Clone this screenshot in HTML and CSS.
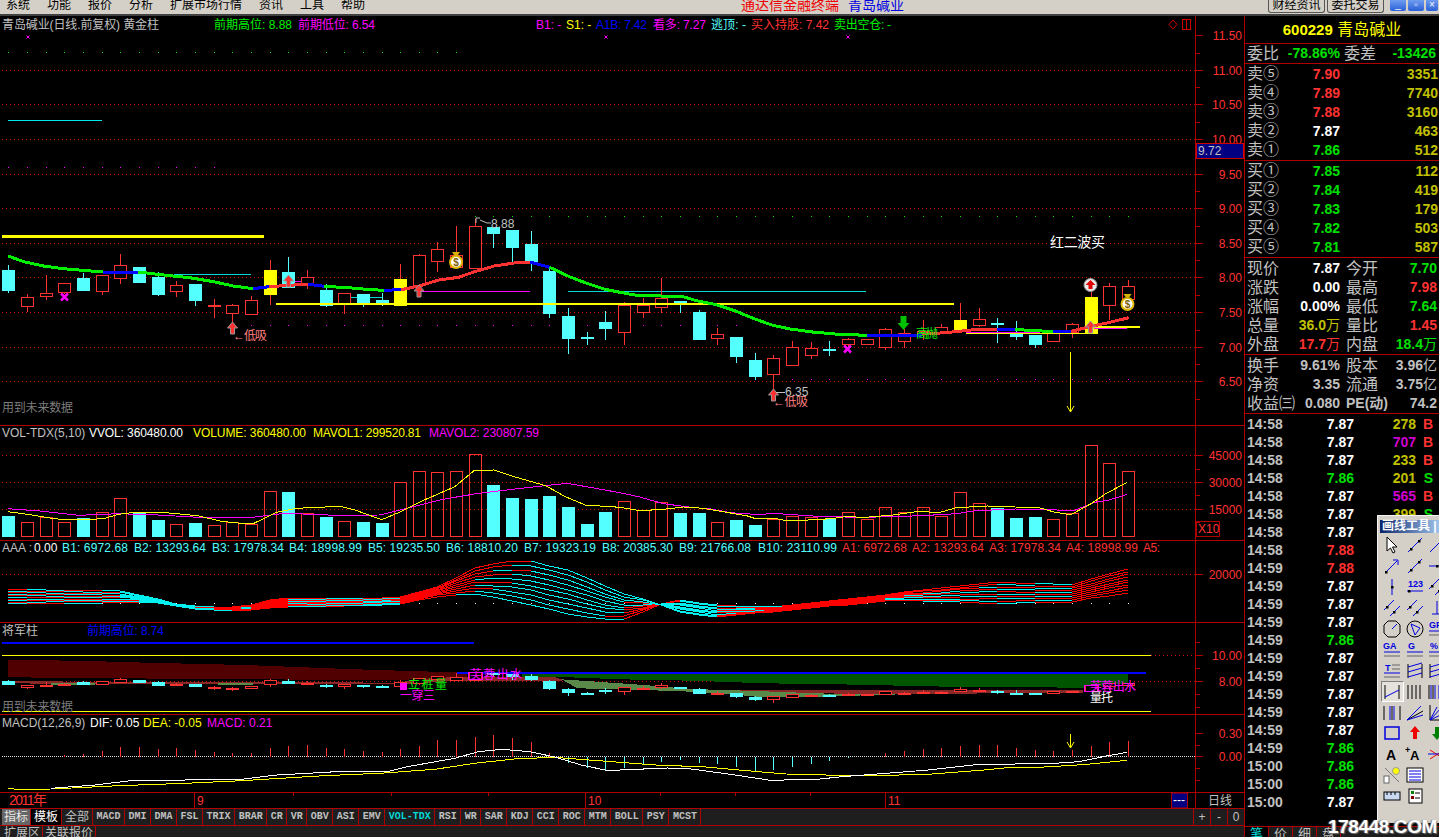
FILE: index.html
```html
<!DOCTYPE html>
<html lang="zh-CN">
<head>
    <meta charset="UTF-8">
    <title>通达信金融终端 - 青岛碱业</title>
    <link rel="stylesheet" href="styles.css">
</head>
<body>
    <div class="menubar">
        <nav class="menu">
            <span>系统</span><span>功能</span><span>报价</span><span>分析</span><span>扩展市场行情</span><span>资讯</span><span>工具</span><span>帮助</span>
        </nav>
        <div class="app-title"><span class="app-name">通达信金融终端</span><span class="app-stock">青岛碱业</span></div>
        <div class="top-btns">
            <span class="top-btn">财经资讯</span><span class="top-btn">委托交易</span>
            <span class="win-btn">_</span><span class="win-btn">▫</span><span class="win-btn win-close">×</span>
        </div>
    </div>

    <div class="workspace">
        <div class="charts">
            <svg id="main" class="panel h-main" viewBox="0 16 1244 409"></svg>
            <svg id="vol" class="panel h-vol" viewBox="0 426 1244 114"></svg>
            <svg id="aaa" class="panel h-aaa" viewBox="0 541 1244 81"></svg>
            <svg id="jj" class="panel h-jj" viewBox="0 623 1244 91"></svg>
            <svg id="macd" class="panel h-macd" viewBox="0 715 1244 77"></svg>
            <svg id="dates" class="panel h-dates" viewBox="0 793 1244 15"></svg>

            <div class="tabs">
                <span class="tab tab-cn tab-active">指标</span>
                <span class="tab tab-cn tab-black">模板</span>
                <span class="tab tab-cn tab-all">全部</span>
                <span class="tab">MACD</span><span class="tab">DMI</span><span class="tab">DMA</span><span class="tab">FSL</span>
                <span class="tab">TRIX</span><span class="tab">BRAR</span><span class="tab">CR</span><span class="tab">VR</span>
                <span class="tab">OBV</span><span class="tab">ASI</span><span class="tab">EMV</span><span class="tab tab-cur">VOL-TDX</span>
                <span class="tab">RSI</span><span class="tab">WR</span><span class="tab">SAR</span><span class="tab">KDJ</span>
                <span class="tab">CCI</span><span class="tab">ROC</span><span class="tab">MTM</span><span class="tab">BOLL</span>
                <span class="tab">PSY</span><span class="tab">MCST</span>
                <span class="zoom-btns"><span>+</span><span>-</span><span>0</span></span>
            </div>
            <div class="ext-tabs"><span>扩展区</span><span>关联报价</span></div>
        </div>

        <aside class="quote">
            <div class="q-head"><b>600229</b> 青岛碱业</div>

            <div class="q-ratio">
                <span class="lbl">委比</span><b class="green">-78.86%</b><span class="lbl">委差</span><b class="green">-13426</b>
            </div>

            <div class="q-book">
                <div class="row"><span class="lbl">卖⑤</span><b class="red">7.90</b><b class="olive">3351</b></div>
                <div class="row"><span class="lbl">卖④</span><b class="red">7.89</b><b class="olive">7740</b></div>
                <div class="row"><span class="lbl">卖③</span><b class="red">7.88</b><b class="olive">3160</b></div>
                <div class="row"><span class="lbl">卖②</span><b class="white">7.87</b><b class="olive">463</b></div>
                <div class="row"><span class="lbl">卖①</span><b class="green">7.86</b><b class="olive">512</b></div>
            </div>
            <div class="q-book">
                <div class="row"><span class="lbl">买①</span><b class="green">7.85</b><b class="olive">112</b></div>
                <div class="row"><span class="lbl">买②</span><b class="green">7.84</b><b class="olive">419</b></div>
                <div class="row"><span class="lbl">买③</span><b class="green">7.83</b><b class="olive">179</b></div>
                <div class="row"><span class="lbl">买④</span><b class="green">7.82</b><b class="olive">503</b></div>
                <div class="row"><span class="lbl">买⑤</span><b class="green">7.81</b><b class="olive">587</b></div>
            </div>

            <div class="q-stats">
                <div class="stat"><span class="lbl">现价</span><b class="white">7.87</b><span class="lbl">今开</span><b class="green">7.70</b></div>
                <div class="stat"><span class="lbl">涨跌</span><b class="white">0.00</b><span class="lbl">最高</span><b class="red">7.98</b></div>
                <div class="stat"><span class="lbl">涨幅</span><b class="white">0.00%</b><span class="lbl">最低</span><b class="green">7.64</b></div>
                <div class="stat"><span class="lbl">总量</span><b class="olive">36.0<i>万</i></b><span class="lbl">量比</span><b class="red">1.45</b></div>
                <div class="stat"><span class="lbl">外盘</span><b class="red">17.7<i>万</i></b><span class="lbl">内盘</span><b class="green">18.4<i>万</i></b></div>
            </div>

            <div class="q-stats q-gray">
                <div class="stat"><span class="lbl">换手</span><b>9.61%</b><span class="lbl">股本</span><b>3.96<i>亿</i></b></div>
                <div class="stat"><span class="lbl">净资</span><b>3.35</b><span class="lbl">流通</span><b>3.75<i>亿</i></b></div>
                <div class="stat"><span class="lbl">收益㈢</span><b>0.080</b><b class="pe">PE(动)</b><b>74.2</b></div>
            </div>

            <div id="ticks" class="q-ticks"></div>

            <div class="q-tabs">
                <span class="cur">笔</span><span>价</span><span>细</span><span>盘</span>
            </div>
        </aside>
    </div>

    <div class="toolbox">
        <div class="tool-title">画线工具 |</div>
        <div id="tools" class="tool-grid"></div>
    </div>
    <div class="watermark">178448.COM</div>

    <script src="chart.js"></script>
</body>
</html>
```

FILE: styles.css
```css
html, body {
    margin: 0;
    height: 100%;
    overflow: hidden;
    background-color: #000;
}

body {
    position: relative;
    font-family: "Liberation Sans", "Noto Sans CJK SC", sans-serif;
    font-size: 12px;
    color: #c0c0c0;
}

/* barre de menu */
.menubar {
    display: flex;
    height: 14px;
    overflow: hidden;
    background-color: #d4d0c8;
    border-bottom: 2px solid #404040;
    color: #000;
    line-height: 10px;
}

.menu {
    display: flex;
    gap: 17px;
    width: 735px;
    padding-left: 6px;
}

.app-title {
    display: flex;
    gap: 9px;
    font-size: 14px;
}

.app-name {
    color: #f00000;
}

.app-stock {
    color: #0000e0;
}

.top-btns {
    display: flex;
    align-items: flex-start;
    margin-left: auto;
}

.top-btn {
    width: 55px;
    height: 12px;
    margin-right: 2px;
    border: 1px solid #555;
    border-top: none;
    border-radius: 0 0 3px 3px;
    text-align: center;
}

.top-btn + .top-btn {
    margin-right: 6px;
}

.win-btn {
    width: 16px;
    height: 11px;
    margin-right: 2px;
    border-radius: 0 0 2px 2px;
    background: linear-gradient(#6f9cf0, #2a5fd8);
    color: #fff;
    font-size: 10px;
    line-height: 9px;
    text-align: center;
}

.win-close {
    width: 12px;
    margin-right: 1px;
}

/* zone principale */
.workspace {
    display: flex;
    height: 821px;
}

.charts {
    width: 1244px;
    border-right: 1px solid #b00000;
}

.panel {
    display: block;
    width: 1244px;
    border-bottom: 1px solid #b00000;
    font-family: "Liberation Sans", "Noto Sans CJK SC", sans-serif;
    font-size: 12px;
}

.h-main { height: 409px; }
.h-vol { height: 114px; }
.h-aaa { height: 81px; }
.h-jj { height: 91px; }
.h-macd { height: 77px; }
.h-dates { height: 15px; }

/* couleurs du graphique */
.t-gray { fill: #c0c0c0; }
.t-dim { fill: #7c7c7c; }
.t-white { fill: #fff; }
.t-red { fill: #ff3232; }
.t-pink { fill: #ff8080; }
.t-green { fill: #00f000; }
.t-magenta { fill: #ff00ff; }
.t-yellow { fill: #ffff00; }
.t-blue { fill: #0000ff; }
.t-cyan { fill: #54ffff; }
.t-big { font-size: 14px; }

.crisp { shape-rendering: crispEdges; }

.grid {
    stroke: #c80000;
    stroke-dasharray: 1 3;
    shape-rendering: crispEdges;
}

.axis {
    stroke: #b00000;
    shape-rendering: crispEdges;
}

.zero {
    stroke: #e0e0e0;
    stroke-dasharray: 1 1;
    shape-rendering: crispEdges;
}

/* onglets */
.tabs {
    display: flex;
    height: 16px;
    padding-left: 2px;
    background-color: #1e1e1e;
    border-bottom: 1px solid #b00000;
}

.tab {
    padding: 0 3.5px;
    border-right: 1px solid #b00000;
    font-family: "Liberation Mono", monospace;
    font-size: 10px;
    font-weight: bold;
    line-height: 16px;
}

.tab-cn {
    padding: 0 2px;
    font-family: "Liberation Sans", "Noto Sans CJK SC", sans-serif;
    font-size: 12px;
    font-weight: normal;
}

.tab-active {
    background-color: #666;
    color: #e8e8e8;
}

.tab-black {
    padding: 0 3px;
    background-color: #000;
    color: #fff;
}

.tab-all {
    padding: 0 3px;
}

.tab-cur {
    color: #00d8d8;
}

.zoom-btns {
    display: flex;
    margin-left: auto;
    line-height: 16px;
    text-align: center;
}

.zoom-btns span {
    width: 16px;
    border-left: 1px solid #b00000;
}

.ext-tabs {
    display: flex;
    height: 11px;
    overflow: hidden;
    padding-left: 2px;
    background-color: #1e1e1e;
    line-height: 14px;
}

.ext-tabs span {
    padding: 0 2px;
    border-right: 1px solid #b00000;
}

/* panneau de cotation */
.quote {
    position: relative;
    width: 194px;
    height: 821px;
}

.q-head {
    height: 27px;
    border-bottom: 1px solid #b00000;
    color: #ffff00;
    font-size: 16px;
    line-height: 28px;
    text-align: center;
}

.quote .q-head b {
    font-size: 15px;
}

.q-ratio {
    display: grid;
    grid-template-columns: 32px 65px 32px 60px;
    height: 19px;
    padding-left: 2px;
    border-bottom: 1px solid #b00000;
    line-height: 19px;
    white-space: nowrap;
}

.q-ratio b {
    text-align: right;
}

.q-ratio b:nth-of-type(1) {
    padding-right: 4px;
}

.q-book {
    height: 96px;
    border-bottom: 1px solid #b00000;
}

.row {
    display: grid;
    grid-template-columns: 36px 57px 98px;
    height: 19px;
    padding-left: 2px;
    line-height: 20px;
}

.row b,
.stat b {
    text-align: right;
}

.q-stats {
    padding-top: 1px;
    border-bottom: 1px solid #b00000;
}

.stat {
    display: grid;
    grid-template-columns: 32px 61px 37px 60px;
    height: 19px;
    padding-left: 2px;
    line-height: 19px;
    white-space: nowrap;
}

.stat .lbl:nth-child(3) {
    padding-left: 6px;
}

.q-stats .pe {
    padding-left: 6px;
    text-align: left;
}

.lbl {
    font-size: 16px;
    color: #c0c0c0;
}

.quote b {
    font-size: 14px;
}

.quote b i {
    font-size: 14px;
    font-style: normal;
    font-weight: normal;
}

.red { color: #ff3232; }
.green { color: #00e000; }
.olive { color: #c0c000; }
.white { color: #fff; }
.magenta { color: #d000d0; }

.q-gray b {
    color: #c0c0c0;
}

.q-ticks {
    padding-top: 1px;
}

.tick {
    display: grid;
    grid-template-columns: 36px 71px 62px 17px;
    height: 18px;
    padding-left: 2px;
    line-height: 18px;
    font-size: 14px;
    font-weight: bold;
}

.tick span {
    text-align: right;
}

.tick .time {
    text-align: left;
    color: #c0c0c0;
}

.q-tabs {
    position: absolute;
    left: 0;
    bottom: 0;
    display: flex;
    width: 100%;
    height: 10px;
    overflow: hidden;
    border-top: 1px solid #b00000;
    background-color: #1e1e1e;
    line-height: 13px;
}

.q-tabs span {
    width: 23px;
    border-right: 1px solid #b00000;
    text-align: center;
    font-size: 13px;
}

.q-tabs .cur {
    background-color: #000;
    color: #00e0e0;
}

/* fenêtre d'outils flottante */
.toolbox {
    position: absolute;
    left: 1377px;
    top: 515px;
    width: 62px;
    height: 307px;
    overflow: hidden;
    background-color: #d4d0c8;
    border-left: 1px solid #f4f4f4;
    border-top: 1px solid #f4f4f4;
}

.tool-title {
    width: 60px;
    height: 13px;
    margin: 4px 0 2px 2px;
    background: linear-gradient(to right, #0a246a, #a6caf0);
    color: #fff;
    font-size: 12px;
    font-weight: bold;
    line-height: 13px;
    padding-left: 2px;
    white-space: nowrap;
}

.tool-grid {
    display: grid;
    grid-template-columns: repeat(3, 22.5px);
    grid-auto-rows: 20.9px;
    padding-left: 3px;
}

.tool {
    display: flex;
    align-items: center;
    justify-content: center;
}

.tool svg {
    width: 20px;
    height: 20px;
    font-family: "Liberation Sans", sans-serif;
}

.tool-on {
    box-sizing: border-box;
    border: 1px solid;
    border-color: #808080 #fff #fff #808080;
    background-color: #e4e1da;
}

.watermark {
    position: absolute;
    right: 2px;
    bottom: 0;
    color: #fff;
    font-size: 19px;
    font-weight: bold;
    letter-spacing: -0.4px;
    line-height: 20px;
    text-shadow: 1px 1px 1px #777, -1px 0 1px #777;
}
```

FILE: chart.js
```js
// Toutes les coordonnées y sont en pixels de la page (viewBox de chaque panneau)
const STEP = 18.66;
const cx = i => Math.round(8.3 + STEP * i);
const RED = '#ff3232', CYAN = '#54ffff', YEL = '#ffff00', MAG = '#ff00ff', GRN = '#00f000', BLU = '#0000ff';

// relevés faits sur l'écran agrandi : [x, y] relevé -> pixel de la page
const scale = (x0, sx, y0) => pts => pts.map(p => [+(x0 + p[0] / sx).toFixed(1), +(y0 + p[1] / 3).toFixed(1)]);
const topL = scale(0, 2.529, 200), topR = scale(620, 2.703, 200);
const volL = scale(0, 2.529, 425), volR = scale(620, 2.529, 425);
const lowL = scale(0, 2.529, 620), lowR = scale(620, 2.529, 620);

function text(x, y, str, cls, width) {
    const len = width ? ` textLength="${width}"` : '';
    return `<text x="${x}" y="${y}" class="${cls}"${len}>${str}</text>`;
}

function rtext(x, y, str, cls) {
    return `<text x="${x}" y="${y}" class="${cls}" text-anchor="end">${str}</text>`;
}

function line(x1, y1, x2, y2, color, w) {
    return `<line x1="${x1}" y1="${y1}" x2="${x2}" y2="${y2}" stroke="${color}" stroke-width="${w || 1}" class="crisp"/>`;
}

function poly(pts, color, w) {
    return `<polyline points="${pts.join(' ')}" fill="none" stroke="${color}" stroke-width="${w || 1}" class="crisp"/>`;
}

function area(pts, color) {
    return `<polygon points="${pts.join(' ')}" fill="${color}" class="crisp"/>`;
}

function grid(y, x1) {
    return `<line x1="${x1 || 2}" y1="${y}" x2="1195" y2="${y}" class="grid"/>`;
}

function axis(y1, y2, labels, minors) {
    let s = `<line x1="1195.5" y1="${y1}" x2="1195.5" y2="${y2}" class="axis"/>`;
    labels.forEach(l => {
        s += `<line x1="1196" y1="${l[0]}" x2="1203" y2="${l[0]}" class="axis"/>`;
        s += rtext(1242, Math.round(l[0]) + 4, l[1], 't-red');
    });
    (minors || []).forEach(y => {
        s += `<line x1="1196" y1="${y}" x2="1200" y2="${y}" class="axis"/>`;
    });
    return s;
}

// [type, haut, corps haut, corps bas, bas] - relevés sur l'écran agrandi
const candles = [
    ['c', 192, 207, 270, 275], ['r', 280, 292, 317, 332], ['r', 222, 279, 287, 296], ['r', 245, 250, 275, 280],
    ['c', 215, 231, 270, 270], ['r', 222, 226, 272, 281], ['r', 159, 196, 233, 248], ['c', 198, 198, 245, 245],
    ['c', 213, 227, 282, 285], ['r', 240, 256, 272, 287], ['c', 249, 249, 300, 315], ['r', 294, 313, 316, 350],
    ['r', 310, 316, 338, 370], ['r', 285, 301, 341, 341], ['y', 177, 207, 281, 311], ['c', 168, 213, 262, 262],
    ['r', 208, 232, 252, 265], ['c', 250, 267, 315, 317], ['r', 280, 280, 310, 338], ['c', 279, 279, 310, 318],
    ['c', 275, 297, 310, 315], ['y', 190, 234, 314, 314], ['r', 160, 166, 254, 270], ['r', 123, 148, 182, 212],
    ['r', 75, 165, 200, 205], ['r', 55, 79, 203, 203], ['c', 78, 78, 99, 140], ['c', 87, 87, 141, 183],
    ['c', 90, 129, 190, 210], ['c', 195, 210, 339, 350], ['c', 321, 345, 414, 458], ['c', 393, 407, 410, 432],
    ['c', 330, 363, 384, 417],
    ['r', 303, 316, 395, 432], ['r', 290, 316, 335, 350], ['r', 232, 293, 320, 335], ['c', 300, 300, 310, 336],
    ['c', 327, 333, 417, 417], ['r', 381, 403, 413, 432], ['c', 408, 408, 468, 486], ['c', 457, 477, 528, 538],
    ['r', 462, 475, 521, 570], ['r', 420, 442, 494, 494], ['r', 423, 445, 464, 473], ['c', 420, 445, 449, 465],
    ['r', 410, 418, 431, 450], ['r', 418, 418, 431, 431], ['r', 381, 388, 440, 446], ['r', 385, 400, 422, 441],
    ['r', 358, 392, 402, 418], ['r', 368, 382, 395, 400], ['y', 306, 357, 387, 395], ['r', 321, 358, 374, 378],
    ['c', 351, 366, 369, 425], ['c', 360, 400, 408, 417], ['c', 402, 402, 432, 441], ['r', 395, 395, 422, 422],
    ['r', 366, 373, 395, 410], ['y', 260, 288, 398, 398], ['r', 246, 259, 314, 357], ['r', 238, 259, 296, 300]
];

function candle(i, map, noYellow) {
    const c = candles[i], x = cx(i) + 0.5;
    const [hi, top, bot, lo] = c.slice(1).map(map);
    const type = noYellow && c[0] === 'y' ? 'r' : c[0];
    const color = type === 'c' ? CYAN : type === 'y' ? YEL : RED;
    const wick = type === 'c' ? CYAN : RED;
    const thin = bot - top < 2;
    let s = line(x, hi, x, top, wick) + line(x, bot, x, lo, wick);
    if (type === 'r' && !thin) {
        s += `<rect x="${x - 6}" y="${top}" width="12" height="${bot - top}" fill="#000" stroke="${RED}" class="crisp"/>`;
    } else {
        s += `<rect x="${x - 6.5}" y="${top}" width="13" height="${Math.max(bot - top, 2)}" fill="${color}" class="crisp"/>`;
    }
    return s;
}

function upArrow(x, y) {
    return `<path d="M${x} ${y - 6}l5 6h-3v6h-4v-6h-3z" fill="${RED}" stroke="#999" stroke-width="1"/>`;
}

function downArrow(x, y) {
    return `<path d="M${x} ${y + 7}l6-7h-3v-7h-6v7h-3z" fill="#00c000"/>`;
}

function moneyBag(x, y) {
    return `<path d="M${x - 4} ${y - 9}h8l-2 3h-4z" fill="#d8b000"/>` +
        `<circle cx="${x}" cy="${y + 1}" r="6" fill="#fff" stroke="#e0b800" stroke-width="2"/>` +
        `<text x="${x}" y="${y + 5}" text-anchor="middle" font-size="10" font-weight="bold" fill="#806000">$</text>`;
}

function cross(x, y, r, w) {
    return `<path d="M${x - r} ${y - r}L${x + r} ${y + r}M${x + r} ${y - r}L${x - r} ${y + r}" stroke="${MAG}" stroke-width="${w}"/>`;
}

function drawMain() {
    let s = '';
    [70.5, 104.5, 139.5, 174.5, 208.5, 243.5, 277.5, 312.5, 347.5, 381.5].forEach(y => { s += grid(y); });

    // points de niveau
    for (let i = 0; i <= 24; i++) s += `<rect x="${cx(i)}" y="52" width="1" height="1" fill="${GRN}"/>`;
    for (let i = 25; i <= 60; i++) s += `<rect x="${cx(i)}" y="216" width="1" height="1" fill="${GRN}"/>`;
    for (let i = 0; i <= 11; i++) s += `<rect x="${cx(i)}" y="167" width="1" height="1" fill="${MAG}"/>`;
    for (let i = 12; i <= 39; i++) s += `<rect x="${cx(i)}" y="325" width="1" height="1" fill="${MAG}"/>`;
    for (let i = 42; i <= 60; i++) s += `<rect x="${cx(i)}" y="379" width="1" height="1" fill="${MAG}"/>`;

    s += line(8, 120.5, 102, 120.5, '#00e8e8');
    s += line(174, 274.5, 251, 274.5, '#00d8d8');
    s += line(344, 297.5, 382, 297.5, '#00d8d8');
    s += line(568, 291.5, 866, 291.5, '#00d8d8');
    s += line(289, 281.5, 306, 281.5, MAG);
    s += line(419, 291.5, 530, 291.5, MAG);

    candles.forEach((c, i) => { s += candle(i, z => Math.round(200 + z / 3) + 0.5); });

    s += line(2, 236.5, 264, 236.5, YEL, 3);
    s += line(276, 303.5, 954, 303.5, YEL, 2);
    s += line(966, 333, 1090, 333, YEL, 1);
    s += line(966, 332, 1040, 332, MAG, 1);
    s += line(1090, 326.5, 1140, 326.5, YEL, 2);
    s += line(1094, 328, 1127, 328, MAG, 1);

    // moyenne épaisse, la couleur suit la tendance
    const ma = [
        [GRN, topL([[21, 168], [60, 185], [110, 198], [160, 206], [210, 211], [260, 216]])],
        [BLU, topL([[260, 216], [350, 216]])],
        [GRN, topL([[350, 216], [420, 226], [480, 233], [540, 245], [590, 258], [640, 266]])],
        [BLU, topL([[640, 266], [680, 260]])],
        [RED, topL([[680, 260], [730, 256], [780, 253]])],
        [BLU, topL([[780, 253], [820, 259]])],
        [GRN, topL([[820, 259], [880, 263], [940, 269], [970, 271]])],
        [BLU, topL([[970, 271], [1015, 269]])],
        [RED, topL([[1015, 269], [1060, 258], [1110, 240], [1160, 232], [1200, 215], [1250, 198], [1300, 189], [1340, 186]])],
        [BLU, topL([[1340, 186], [1390, 202]])],
        [GRN, topL([[1390, 202], [1440, 230], [1480, 248], [1530, 268], [1568, 277]])],
        [GRN, topR([[0, 277], [50, 287], [110, 288], [170, 290], [210, 303], [260, 314], [310, 332], [360, 355], [410, 375], [460, 387], [520, 396], [590, 403], [668, 406]])],
        [BLU, topR([[668, 405], [815, 405]])],
        [RED, topR([[815, 402], [880, 398], [950, 390], [1020, 387]])],
        [BLU, topR([[1020, 387], [1068, 387]])],
        [GRN, topR([[1068, 387], [1110, 392], [1170, 394]])],
        [BLU, topR([[1170, 394], [1220, 394]])],
        [RED, topR([[1220, 394], [1270, 380], [1320, 368], [1375, 353]])]
    ];
    ma.forEach(m => { s += poly(m[1], m[0], 3); });

    // signaux
    s += upArrow(232.5, 328) + upArrow(288.5, 281) + upArrow(419, 291) + upArrow(773.5, 395) + upArrow(1090.5, 327);
    s += `<circle cx="1090.5" cy="285" r="6.5" fill="#e8e8e8" stroke="#999"/>`;
    s += `<path d="M1090.5 280l5 5h-3v4h-4v-4h-3z" fill="#e00000"/>`;
    s += moneyBag(456, 261) + moneyBag(1127.5, 303);
    s += downArrow(903.5, 323);
    s += cross(64.5, 297, 3.5, 2.5) + cross(847.5, 349, 3.5, 2.5);
    s += cross(28, 37, 1.5, 1) + cross(606, 37, 1.5, 1) + cross(848, 37, 1.5, 1);

    s += text(233, 339.5, '←低吸', 't-pink', 34);
    s += text(773, 406, '←低吸', 't-pink', 35);
    s += text(916, 338, '高抛', 't-green', 22);
    s += text(1050, 247, '红二波买', 't-white t-big', 55);
    s += `<path d="M476 223v-5h4M480 220l7 3h4" stroke="#c0c0c0" fill="none"/>`;
    s += text(491, 228, '8.88', 't-gray');
    s += line(776, 392.5, 785, 392.5, '#c0c0c0');
    s += text(785, 396, '6.35', 't-gray');
    s += line(1070.5, 352, 1070.5, 412, YEL);
    s += `<path d="M1067 406l3.5 6 3.5-6" stroke="${YEL}" fill="none"/>`;

    s += text(2, 29, '青岛碱业(日线.前复权) 黄金柱', 't-gray', 157);
    s += text(214, 29, '前期高位: 8.88', 't-green', 78);
    s += text(298, 29, '前期低位: 6.54', 't-magenta', 77);
    s += text(536, 29, 'B1: -', 't-magenta');
    s += text(566, 29, 'S1: -', 't-yellow');
    s += text(596, 29, 'A1B: 7.42', 't-blue', 51);
    s += text(653, 29, '看多: 7.27', 't-magenta', 53);
    s += text(711, 29, '逃顶: -', 't-cyan', 35);
    s += text(751, 29, '买入持股: 7.42', 't-red', 78);
    s += text(834, 29, '卖出空仓: -', 't-green', 57);
    s += text(2, 412, '用到未来数据', 't-dim', 71);
    s += `<path d="M1173 20l4 4.5-4 4.5-4-4.5z" fill="none" stroke="#d00000"/><rect x="1182.5" y="19.5" width="8" height="10" fill="none" stroke="#d00000"/><line x1="1186.5" y1="20" x2="1186.5" y2="29" stroke="#d00000"/>`;

    const labels = [[35.5, '11.50'], [70.5, '11.00'], [104.5, '10.50'], [139.5, '10.00'], [174.5, '9.50'], [208.5, '9.00'],
        [243.5, '8.50'], [277.5, '8.00'], [312.5, '7.50'], [347.5, '7.00'], [381.5, '6.50']];
    const minors = [53.5, 87.5, 122.5, 191.5, 226.5, 260.5, 295.5, 330.5, 364.5, 399.5];
    s += axis(16, 425, labels, minors);
    s += `<rect x="1196.5" y="143.5" width="47" height="15" fill="#000080" stroke="#d00000"/>`;
    s += text(1198, 155, '9.72', 't-gray');
    document.getElementById('main').innerHTML = s;
}

function drawVol() {
    const tops = [270, 292, 277, 292, 276, 262, 220, 262, 282, 298, 291, 301, 290, 298, 199, 198, 265, 273, 289, 288, 291,
        172, 139, 142, 139, 88, 177, 216, 219, 210, 243, 294, 258, 229, 256, 232, 261, 261, 292, 282, 297, 282, 272, 277,
        280, 262, 282, 247, 262, 247, 273, 202, 235, 246, 276, 273, 283, 265, 61, 115, 139];
    const cyanBars = [0, 4, 7, 8, 10, 15, 17, 19, 20, 26, 27, 28, 29, 30, 31, 32, 36, 37, 39, 40, 44, 53, 54, 55];
    let s = grid(455.5) + grid(482.5) + grid(509.5);

    tops.forEach((t, i) => {
        const y = Math.round(425 + t / 3) + 0.5, x = cx(i) + 0.5, h = 536.5 - y;
        if (cyanBars.includes(i)) {
            s += `<rect x="${x - 6.5}" y="${y}" width="13" height="${h}" fill="${CYAN}" class="crisp"/>`;
        } else {
            s += `<rect x="${x - 6}" y="${y}" width="12" height="${h}" fill="none" stroke="${RED}" class="crisp"/>`;
        }
    });

    const yel = volL([[20, 260], [70, 268], [130, 280], [165, 284], [225, 284], [265, 280], [300, 268], [340, 262], [420, 263], [500, 272], [560, 289], [620, 296], [640, 296], [700, 262], [750, 250], [860, 244], [900, 256], [965, 284], [1010, 262], [1060, 232], [1150, 185], [1200, 136], [1250, 135], [1300, 155], [1380, 182], [1430, 215], [1480, 240], [1568, 247]])
        .concat(volR([[50, 257], [110, 253], [160, 246], [210, 250], [260, 260], [320, 272], [340, 280], [400, 282], [420, 287], [500, 284], [540, 280], [570, 275], [620, 277], [690, 270], [750, 260], [810, 262], [850, 248], [930, 243], [1000, 246], [1060, 248], [1100, 262], [1140, 269], [1190, 237], [1230, 205], [1283, 172]]));
    const mag = volL([[20, 251], [100, 258], [200, 271], [300, 266], [400, 270], [500, 277], [640, 277], [720, 265], [850, 271], [960, 270], [1040, 247], [1120, 223], [1200, 207], [1260, 198], [1340, 187], [1435, 175], [1568, 203]])
        .concat(volR([[50, 216], [110, 236], [180, 247], [230, 252], [280, 263], [340, 268], [400, 266], [500, 274], [600, 277], [700, 275], [780, 271], [850, 266], [900, 257], [1000, 252], [1060, 254], [1150, 256], [1200, 232], [1235, 226], [1283, 208]]));
    s += poly(mag, MAG) + poly(yel, YEL);

    s += text(2, 437, 'VOL-TDX(5,10)', 't-gray');
    s += text(89, 437, 'VVOL: 360480.00', 't-white', 94);
    s += text(193, 437, 'VOLUME: 360480.00', 't-yellow', 113);
    s += text(313, 437, 'MAVOL1: 299520.81', 't-yellow', 108);
    s += text(429, 437, 'MAVOL2: 230807.59', 't-magenta', 110);

    s += axis(426, 540, [[455.5, '45000'], [482.5, '30000'], [509.5, '15000']], [469.5, 495.5, 522.5]);
    s += `<rect x="1196.5" y="521.5" width="23" height="15" fill="none" stroke="#b00000"/>`;
    s += text(1198, 533, 'X10', 't-red');
    document.getElementById('vol').innerHTML = s;
}

function lerp(pts, x) {
    for (let k = 1; k < pts.length; k++) {
        if (x <= pts[k][0]) {
            const a = pts[k - 1], b = pts[k];
            return a[1] + (b[1] - a[1]) * (x - a[0]) / (b[0] - a[0]);
        }
    }
    return pts[pts.length - 1][1];
}

function drawAaa() {
    let s = grid(574.5);
    for (let i = 5; i <= 60; i++) s += `<rect x="${cx(i)}" y="603" width="1" height="1" fill="#fff"/>`;

    // les 10 moyennes : on interpole entre la plus haute et la plus basse
    const upper = volL([[20, 492], [300, 497], [370, 515], [440, 535], [520, 548], [620, 545], [700, 518], [1000, 520], [1100, 490], [1200, 430], [1280, 407], [1340, 407], [1450, 440], [1568, 505]])
        .concat(volR([[70, 525], [150, 560], [240, 578], [400, 558], [700, 525], [950, 535], [1140, 530], [1282, 503]]));
    const lower = volL([[20, 535], [250, 533], [370, 530], [440, 542], [520, 556], [620, 558], [720, 545], [1000, 540], [1100, 515], [1190, 505], [1250, 515], [1340, 540], [1450, 570], [1520, 582], [1568, 585]])
        .concat(volR([[60, 560], [130, 522], [240, 540], [400, 545], [700, 505], [950, 470], [1140, 480], [1282, 432]]));

    for (let k = 0; k < 10; k++) {
        const f = k / 9;
        const yAt = i => lerp(lower, cx(i)) * (1 - f) + lerp(upper, cx(i)) * f;
        for (let i = 1; i < candles.length; i++) {
            const dy = yAt(i) - yAt(i - 1);
            let color = (Math.floor(i / 2) + k) % 2 ? '#ff0000' : '#00f0f0';
            if (dy < -1.5) color = '#ff0000';
            if (dy > 1.5) color = '#00f0f0';
            s += poly([[cx(i - 1), Math.round(yAt(i - 1))], [cx(i), Math.round(yAt(i))]], color, 1);
        }
    }

    s += text(2, 552, 'AAA :', 't-gray');
    s += text(34, 552, '0.00', 't-white');
    const cyanLabels = [[62, 'B1: 6972.68', 66], [134, 'B2: 13293.64', 72], [212, 'B3: 17978.34', 72], [289, 'B4: 18998.99', 73],
        [368, 'B5: 19235.50', 72], [446, 'B6: 18810.20', 72], [524, 'B7: 19323.19', 72], [602, 'B8: 20385.30', 71],
        [679, 'B9: 21766.08', 72], [758, 'B10: 23110.99', 79]];
    cyanLabels.forEach(l => { s += text(l[0], 552, l[1], 't-cyan', l[2]); });
    const redLabels = [[842, 'A1: 6972.68', 65], [912, 'A2: 13293.64', 72], [989, 'A3: 17978.34', 72], [1066, 'A4: 18998.99', 72], [1143, 'A5:', 17]];
    redLabels.forEach(l => { s += text(l[0], 552, l[1], 't-red', l[2]); });

    s += axis(541, 622, [[574.5, '20000']]);
    document.getElementById('aaa').innerHTML = s;
}

function drawJj() {
    let s = grid(681.5);
    s += `<line x1="1151" y1="655.5" x2="1195" y2="655.5" class="grid"/>`;

    const darkRed = lowL([[20, 120], [200, 122], [370, 128], [620, 135], [900, 148], [1180, 158], [1180, 172], [1000, 180], [600, 178], [20, 172]]);
    s += area(darkRed, '#500000');
    const brown = lowL([[20, 183], [300, 186], [700, 186], [1000, 188], [1040, 182], [1150, 170], [1400, 170], [1420, 178], [1420, 182], [1150, 182], [1040, 192], [700, 193], [300, 193], [20, 190]]);
    s += area(brown, '#8a2828');
    s += area(lowR([[220, 210], [1170, 210], [1170, 218], [740, 222], [220, 218]]), '#8a2828');

    s += area(lowL([[1320, 160], [1568, 160], [1568, 178], [1400, 170], [1320, 170]]), '#005500');
    s += area(lowR([[0, 160], [1285, 160], [1285, 190], [1170, 203], [830, 200], [550, 193], [365, 190], [180, 182], [0, 178]]), '#005500');
    s += area(lowL([[1420, 178], [1568, 190], [1568, 208], [1460, 205]]), '#5a8a4a');
    s += area(lowR([[0, 190], [60, 195], [180, 207], [320, 212], [550, 222], [740, 222], [450, 232], [360, 232], [300, 225], [180, 215], [60, 210], [0, 208]]), '#5a8a4a');
    s += area(lowL([[130, 188], [240, 188], [240, 195], [130, 195]]), '#5a8a4a');
    s += area(lowL([[550, 188], [640, 188], [640, 195], [550, 195]]), '#5a8a4a');

    s += line(2, 642.5, 474, 642.5, BLU, 2);
    s += line(457, 672.5, 1146, 672.5, BLU, 2);
    s += line(2, 655.5, 1151, 655.5, YEL);
    s += line(2, 711.5, 1151, 711.5, YEL);

    // mêmes bougies, écrasées sur 25 px
    candles.forEach((c, i) => { s += candle(i, z => Math.round(620 + (180 + (z - 207) * 0.18) / 3) + 0.5, true); });

    s += `<rect x="${cx(25) - 7}" y="672.5" width="14" height="7" fill="none" stroke="${MAG}" class="crisp"/>`;
    s += `<rect x="${cx(58) - 7}" y="685.5" width="14" height="6" fill="none" stroke="${MAG}" class="crisp"/>`;
    s += `<rect x="400" y="682.5" width="7" height="7" fill="${MAG}" class="crisp"/>`;

    s += text(2, 635, '将军柱', 't-gray');
    s += text(87, 635, '前期高位: 8.74', 't-blue', 77);
    s += text(2, 711, '用到未来数据', 't-dim', 71);
    s += text(408, 689, '立桩量', 't-green', 39);
    s += text(400, 700, '一穿三', 't-magenta', 35);
    s += text(470, 679, '芙蓉出水', 't-magenta', 52);
    s += text(1090, 691, '芙蓉出水', 't-magenta', 46);
    s += text(1090, 702, '量托', 't-white', 23);

    s += axis(623, 714, [[655.5, '10.00'], [681.5, '8.00']], [642.5, 668.5, 694.5, 707.5]);
    document.getElementById('jj').innerHTML = s;
}

function drawMacd() {
    const zero = 756.5;
    // extrémité des histogrammes, null = pas de barre
    const ends = [null, null, null, 406, 403, 393, 381, 381, 388, 385, 391, 397, 400, 400, 385, 378, 375, 385, 388, 393, 396,
        388, 378, 360, 360, 350, 345, 355, 366, 400, 428, 445, 450, 445, 433, 425, 420, 430, 432, 440, 455, 450, 441, 432, 423,
        414, null, 399, 393, 387, 384, 378, 375, 375, 384, 390, 393, 390, 378, 366, 363];
    let s = `<line x1="2" y1="${zero}" x2="1195" y2="${zero}" class="zero"/>`;
    ends.forEach((e, i) => {
        if (e === null) return;
        const y = Math.round(620 + e / 3);
        s += line(cx(i) + 0.5, zero, cx(i) + 0.5, y, y < zero ? RED : CYAN);
    });

    const dea = lowL([[20, 506], [50, 508], [130, 507], [300, 497], [470, 490], [610, 482], [820, 467], [960, 460], [1100, 448], [1200, 430], [1300, 417], [1400, 412], [1568, 427]])
        .concat(lowR([[100, 436], [210, 440], [300, 450], [420, 462], [620, 468], [790, 462], [920, 450], [980, 443], [1060, 442], [1170, 434], [1282, 421]]));
    const dif = lowL([[130, 505], [240, 495], [330, 482], [610, 478], [700, 465], [850, 455], [980, 455], [1030, 440], [1150, 415], [1210, 395], [1270, 388], [1340, 395], [1400, 410], [1470, 435], [1530, 450], [1568, 450]])
        .concat(lowR([[120, 444], [180, 447], [260, 460], [330, 472], [380, 481], [500, 478], [560, 470], [660, 461], [780, 450], [900, 434], [1100, 430], [1160, 425], [1230, 408], [1283, 397]]));
    s += poly(dea, YEL) + poly(dif, '#fff');

    s += line(1070.5, 734, 1070.5, 747, YEL);
    s += `<path d="M1067 742l3.5 6 3.5-6" stroke="${YEL}" fill="none"/>`;

    s += text(2, 727, 'MACD(12,26,9)', 't-gray');
    s += text(90, 727, 'DIF: 0.05', 't-white');
    s += text(143, 727, 'DEA: -0.05', 't-yellow');
    s += text(207, 727, 'MACD: 0.21', 't-magenta');

    s += axis(715, 792, [[733.5, '0.30'], [756.5, '0.00']], [745.5, 768.5, 780.5]);
    document.getElementById('macd').innerHTML = s;
}

function drawDates() {
    let s = text(9, 805, '2011年', 't-red t-big', 38);
    [194.5, 585.5, 885.5].forEach(x => { s += line(x, 793, x, 808, '#b00000'); });
    [293.5, 391.5, 488.5, 660.5, 735.5, 810.5].forEach(x => { s += line(x, 793, x, 796, '#b00000'); });
    s += text(197, 805, '9', 't-red') + text(588, 805, '10', 't-red') + text(888, 805, '11', 't-red');
    s += `<rect x="1171.5" y="793" width="16" height="15" fill="#000080" stroke="#b00000"/>`;
    s += text(1173, 804, '---', 't-white');
    s += line(1195.5, 793, 1195.5, 808, '#b00000');
    s += text(1208, 805, '日线', 't-gray');
    document.getElementById('dates').innerHTML = s;
}

function drawTicks() {
    const prices = { 3: '7.86', 7: '7.88', 8: '7.88', 12: '7.86', 18: '7.86', 19: '7.86', 20: '7.86' };
    const vols = [['278', 'olive', 'B', 'red'], ['707', 'magenta', 'B', 'red'], ['233', 'olive', 'B', 'red'],
        ['201', 'olive', 'S', 'green'], ['565', 'magenta', 'B', 'red'], ['399', 'olive', 'S', 'green']];
    let html = '';
    for (let i = 0; i < 22; i++) {
        const time = i < 8 ? '14:58' : i < 19 ? '14:59' : '15:00';
        const p = prices[i] || '7.87';
        const pc = p === '7.87' ? 'white' : p === '7.88' ? 'red' : 'green';
        const v = vols[i];
        html += `<div class="tick"><span class="time">${time}</span><span class="${pc}">${p}</span>` +
            (v ? `<span class="${v[1]}">${v[0]}</span><span class="${v[3]}">${v[2]}</span>` : '') + '</div>';
    }
    document.getElementById('ticks').innerHTML = html;
}

// icônes de la boîte d'outils (20x20)
const B = '#0000e0';
const node = (x, y) => `<rect x="${x - 1}" y="${y - 1}" width="2.5" height="2.5" fill="#000"/>`;
const seg = (x1, y1, x2, y2, c) => `<line x1="${x1}" y1="${y1}" x2="${x2}" y2="${y2}" stroke="${c || B}"/>`;
const lab = (x, y, t, c, size) => `<text x="${x}" y="${y}" font-size="${size || 9}" font-weight="bold" fill="${c || B}">${t}</text>`;
const bars = (y, c) => seg(2, y, 18, y, c || '#666');
const diag = seg(3, 17, 17, 3) + node(6, 14) + node(14, 6);
const doubleDiag = seg(2, 12, 12, 2) + seg(8, 18, 18, 8) + node(5, 9) + node(12, 14);
const channel = seg(3, 3, 3, 17, '#000') + seg(17, 3, 17, 17, '#000') + seg(3, 6, 17, 2) + seg(3, 11, 17, 7) + seg(3, 16, 17, 12);
const vlines = xs => xs.map(x => seg(x, 3, x, 17, x % 4 ? '#000' : B)).join('');

const tools = [
    '<path d="M5 2v14l3.5-3 2.5 5 2-1-2.5-5h4.5z" fill="#fff" stroke="#000"/>', diag, seg(3, 17, 17, 3) + node(14, 6),
    seg(3, 17, 15, 5) + node(4, 16) + '<path d="M11 4h5v5" fill="none" stroke="' + B + '"/>', diag, seg(2, 10, 20, 10) + node(10, 10),
    seg(10, 2, 10, 18) + node(10, 10), lab(3, 10, '123') + seg(2, 14, 18, 14) + node(4, 14), doubleDiag,
    doubleDiag, doubleDiag, seg(10, 3, 10, 16) + seg(5, 16, 20, 16),
    '<polygon points="6,2 14,2 18,6 18,14 14,18 6,18 2,14 2,6" fill="none" stroke="#000"/>' + seg(10, 10, 15, 5),
    '<circle cx="10" cy="10" r="8" fill="none" stroke="#000"/><path d="M6 5l9 4-5 7z" fill="none" stroke="' + B + '"/>',
    lab(2, 9, 'GP') + seg(2, 12, 18, 12) + bars(16),
    lab(1, 9, 'GA') + seg(2, 12, 18, 12) + bars(16), lab(3, 9, 'G') + seg(2, 12, 18, 12) + bars(16), lab(3, 9, '%') + seg(2, 12, 18, 12) + bars(16),
    lab(3, 10, 'T') + seg(10, 4, 18, 4, '#666') + seg(10, 8, 18, 8, '#666') + seg(2, 12, 18, 12) + bars(16), channel, channel,
    seg(3, 3, 3, 17, '#000') + seg(17, 3, 17, 17, '#000') + seg(3, 15, 17, 8), vlines([3, 7, 11, 15]), vlines([2, 4, 6, 8, 12, 16]),
    vlines([2, 8, 10, 12, 18]), seg(2, 17, 18, 8, '#000') + seg(2, 17, 18, 12) + seg(2, 17, 16, 3, B), seg(3, 2, 3, 17, '#000') + seg(3, 17, 18, 17, '#000') + seg(3, 17, 16, 3) + seg(3, 17, 18, 10) + seg(3, 17, 10, 4),
    '<rect x="3" y="4" width="14" height="12" fill="none" stroke="' + B + '" stroke-width="1.5"/>', '<path d="M10 3l5 6h-3v7h-4v-7h-3z" fill="#f00000"/>', '<path d="M10 17l5-6h-3v-7h-4v7h-3z" fill="#008000"/>',
    lab(4, 16, 'A', '#000', 14), lab(5, 16, 'A', '#000', 13) + lab(0, 9, '+', '#000', 9), seg(3, 6, 17, 15, '#f00000') + seg(3, 15, 17, 6, '#f00000') + seg(1, 10, 20, 10),
    '<circle cx="14" cy="6" r="3.5" fill="#ffff00" stroke="#999"/><rect x="2" y="11" width="5" height="7" fill="#fff" stroke="#666"/>' + seg(3, 3, 17, 17, '#777'),
    '<rect x="2" y="3" width="16" height="14" fill="#fff" stroke="#000"/>' + seg(4, 6, 16, 6) + seg(4, 9, 16, 9) + seg(4, 12, 16, 12) + seg(4, 15, 16, 15), '',
    '<rect x="2" y="6" width="16" height="8" fill="#c8d8f0" stroke="#000"/>' + seg(5, 6, 5, 9, '#000') + seg(9, 6, 9, 9, '#000') + seg(13, 6, 13, 9, '#000'),
    '<rect x="4" y="3" width="13" height="14" fill="#fff" stroke="#000"/><rect x="6" y="5" width="3" height="3" fill="#008000"/><rect x="6" y="10" width="3" height="3" fill="#800000"/>' + seg(10, 7, 15, 7, '#000') + seg(10, 12, 15, 12, '#000'), ''
];

function drawTools() {
    document.getElementById('tools').innerHTML = tools.map((t, i) =>
        `<span class="tool${i === 21 ? ' tool-on' : ''}"><svg viewBox="0 0 20 20">${t}</svg></span>`).join('');
}

drawMain();
drawVol();
drawAaa();
drawJj();
drawMacd();
drawDates();
drawTicks();
drawTools();
```
